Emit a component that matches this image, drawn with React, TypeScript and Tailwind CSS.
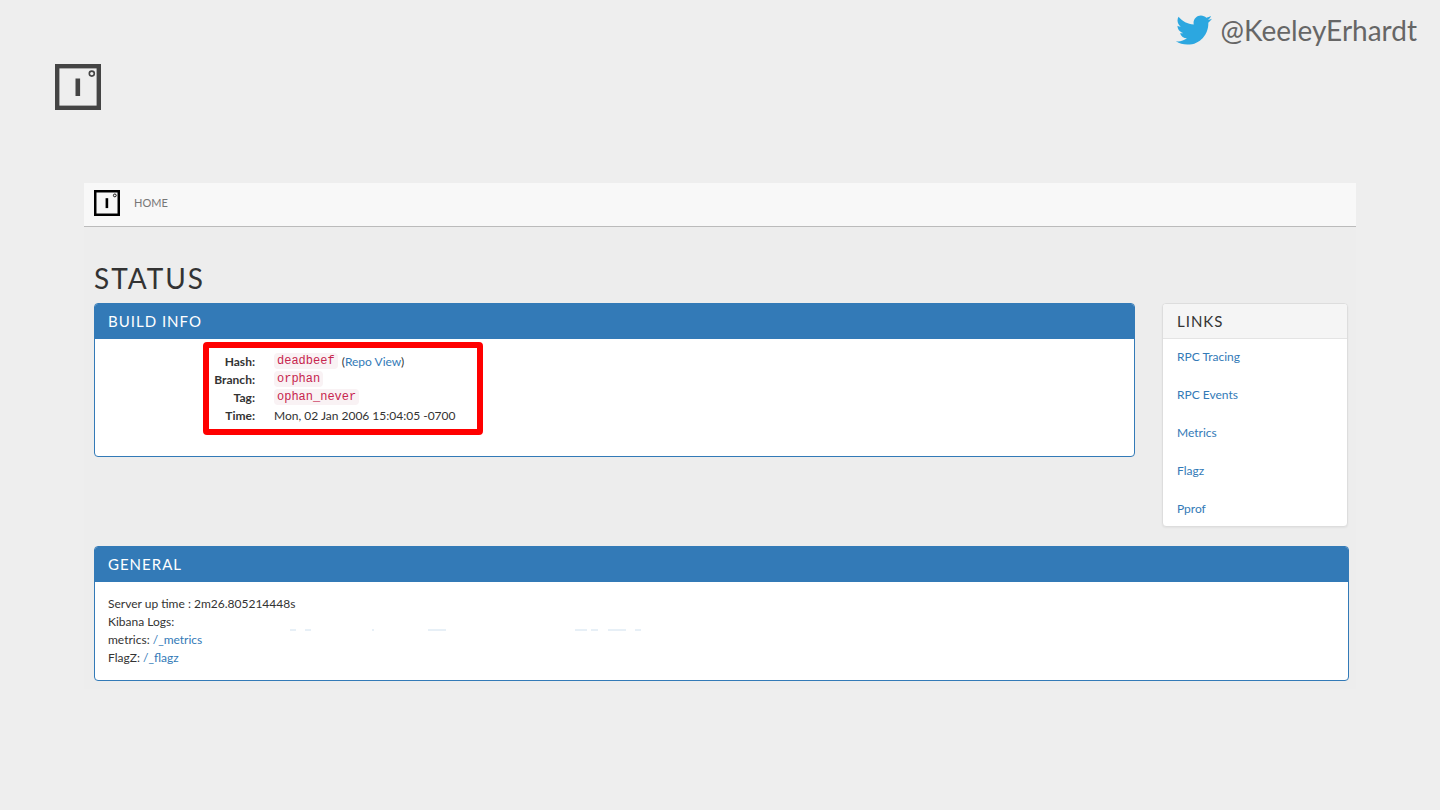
import type { ReactNode } from "react";
import { FaTwitter } from "react-icons/fa";

const links = ["RPC Tracing", "RPC Events", "Metrics", "Flagz", "Pprof"];

function Logo({ className }: { className: string }) {
  return (
    <svg viewBox="0 0 46 46" className={className} aria-hidden="true">
      <rect x="2.2" y="2.2" width="41.6" height="41.6" fill="none" stroke="currentColor" strokeWidth="4.4" />
      <rect x="20.5" y="14.5" width="4.6" height="17.5" fill="currentColor" />
      <circle cx="36.8" cy="9.6" r="2.5" fill="none" stroke="currentColor" strokeWidth="1.6" />
    </svg>
  );
}

function Panel({ title, children }: { title: string; children: ReactNode }) {
  return (
    <section className="rounded border border-[#337ab7] bg-white overflow-hidden">
      <h2 className="h-[35px] px-[13px] pb-[2px] flex items-center bg-[#337ab7] text-white text-[15px] leading-[18px] tracking-[1px]">
        {title}
      </h2>
      {children}
    </section>
  );
}

function Code({ children }: { children: ReactNode }) {
  return (
    <code className="inline-block rounded bg-[#f9f2f4] px-[3px] leading-4 align-top text-[#c7254e] font-['Liberation_Mono',monospace] text-[12px]">
      {children}
    </code>
  );
}

function BuildInfo() {
  return (
    <Panel title="BUILD INFO">
      <div className="w-[280px] ml-[108px] mt-[3px] mb-[21px] rounded-[4px] border-6 border-[#ff0000] pt-[5px] pb-1 pl-[5px]">
        <dl className="grid grid-cols-[41px_1fr] auto-rows-[18px] gap-x-[19px] whitespace-nowrap">
          <dt className="font-bold text-right">Hash:</dt>
          <dd>
            <Code>deadbeef</Code>{" "}
            <span className="ml-px">
              (
              <a href="#repo" className="text-[#337ab7]">
                Repo View
              </a>
              )
            </span>
          </dd>
          <dt className="font-bold text-right">Branch:</dt>
          <dd>
            <Code>orphan</Code>
          </dd>
          <dt className="font-bold text-right">Tag:</dt>
          <dd>
            <Code>ophan_never</Code>
          </dd>
          <dt className="font-bold text-right">Time:</dt>
          <dd>Mon, 02 Jan 2006 15:04:05 -0700</dd>
        </dl>
      </div>
    </Panel>
  );
}

function LinksPanel() {
  return (
    <nav className="w-[186px] shrink-0 rounded border border-[#dddddd] bg-white shadow-xs overflow-hidden">
      <h2 className="h-[35px] px-[14px] pb-px flex items-center border-b border-[#e4e4e4] bg-[#f5f5f5] text-[15px] leading-[18px] tracking-[1px]">
        LINKS
      </h2>
      <ul className="flex flex-col gap-5 px-[14px] pt-[9px] pb-2">
        {links.map((link) => (
          <li key={link}>
            <a href="#link" className="block text-[#337ab7]">
              {link}
            </a>
          </li>
        ))}
      </ul>
    </nav>
  );
}

function General() {
  return (
    <Panel title="GENERAL">
      <div className="px-[13px] py-[13px]">
        <p>Server up time : 2m26.805214448s</p>
        <div className="flex items-end">
          <p className="w-[180px]">Kibana Logs:</p>
          {/* what is left of the wiped log url */}
          <svg viewBox="0 0 360 2" className="w-[360px] h-[2px]" aria-hidden="true">
            <path d="M2 1h6M17 1h6M84 1h2M140 1h18M287 1h12M303 1h7M320 1h18M347 1h6" stroke="#cfe0ee" fill="none" />
          </svg>
        </div>
        <p>
          metrics:{" "}
          <a href="#metrics" className="text-[#337ab7]">
            /_metrics
          </a>
        </p>
        <p>
          FlagZ:{" "}
          <a href="#flagz" className="text-[#337ab7]">
            /_flagz
          </a>
        </p>
      </div>
    </Panel>
  );
}

export default function App() {
  return (
    <div className="min-h-screen bg-[#eeeeee] text-[#333333] font-[Lato,sans-serif] text-[12px] leading-[18px]">
      <header className="flex items-start justify-between pl-[55px] pr-[23px] pt-3 pb-[73px]">
        <Logo className="w-[46px] h-[46px] mt-[52px] text-[#444444]" />
        <a href="#twitter" className="flex items-center gap-2 text-[28px] leading-[36px] text-[#666666]">
          <FaTwitter className="text-[#2ca7e0] text-[36px]" />
          @KeeleyErhardt
        </a>
      </header>

      <main className="mx-[84px] bg-[#ededed]">
        <div className="h-11 flex items-center gap-[14px] px-[10px] pb-1 bg-[#f8f8f8] border-b border-[#bbbbbb]">
          <Logo className="w-[26px] h-[26px] text-black" />
          <a href="#home" className="text-[11px] text-[#777777]">
            HOME
          </a>
        </div>

        <div className="pl-[10px] pr-[7px] pt-[34px] pb-2">
          <h1 className="text-[28px] leading-[34px] tracking-[2px] mb-2">STATUS</h1>
          <div className="flex items-start gap-[27px] pr-px mb-[19px]">
            <div className="flex-1">
              <BuildInfo />
            </div>
            <LinksPanel />
          </div>
          <General />
        </div>
      </main>
    </div>
  );
}
